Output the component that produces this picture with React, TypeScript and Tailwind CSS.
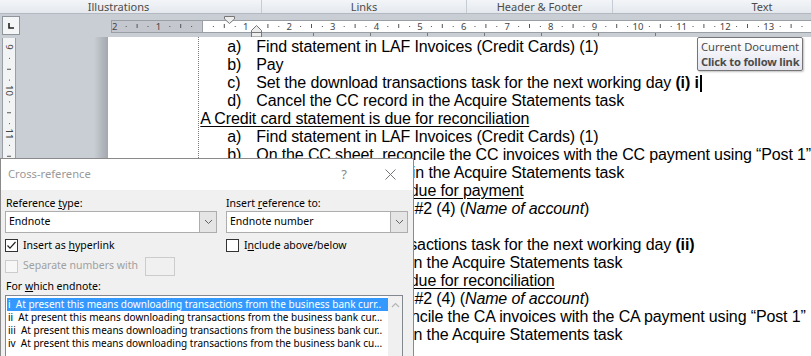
import React from "react";

const UI = { fontFamily: '"Noto Sans", "Open Sans", sans-serif' };
const DOC = { fontFamily: '"Liberation Sans", Arial, sans-serif' };

function HRuler() {
  const cm = 43.6;
  const zero = 91;
  const nums: { x: number; n: number }[] = [];
  for (let i = -2; i <= 13; i++) {
    if (i === 0) continue;
    nums.push({ x: zero + i * cm, n: Math.abs(i) });
  }
  const marks: React.ReactNode[] = [];
  for (let i = -2; i <= 14; i++) {
    const base = zero + i * cm;
    [0.25, 0.75].forEach((f, k) =>
      marks.push(<rect key={`d${i}-${k}`} x={base + f * cm} y={12} width={1} height={1} fill="#555" />)
    );
    marks.push(<rect key={`t${i}`} x={base + 0.5 * cm} y={10} width={1} height={4} fill="#555" />);
  }
  const tabs = [313, 370, 427, 484, 541, 598, 655].map((x) => x - 111);
  return (
    <svg width={700} height={23} className="block">
      <rect x={0.5} y={6.5} width={700} height={12} fill="#fff" stroke="#9a9fa6" />
      <rect x={0.5} y={6.5} width={zero} height={12} fill="#c4c8ce" stroke="#9a9fa6" />
      {marks}
      {nums.map((p) => (
        <text key={p.x} x={p.x} y={16} fontSize={9.5} fill="#444" textAnchor="middle" style={UI}>
          {p.n}
        </text>
      ))}
      {tabs.map((x) => (
        <rect key={x} x={x} y={19} width={1} height={3} fill="#777" />
      ))}
      <path d="M113.5 2.5 L123.5 2.5 L123.5 5 L118.5 9.5 L113.5 5 Z" fill="#ededed" stroke="#777" />
      <path d="M140.5 16.5 L145.5 11.5 L150.5 16.5 L150.5 18.5 L140.5 18.5 Z" fill="#ededed" stroke="#777" />
      <rect x={140.5} y={18.5} width={10} height={4.5} fill="#ededed" stroke="#777" />
    </svg>
  );
}

function VRuler() {
  const cm = 43.5;
  const items: React.ReactNode[] = [];
  const nums = [
    { y: 9, n: 9 },
    { y: 52.5, n: 10 },
    { y: 96, n: 11 },
  ];
  nums.forEach((p) => {
    items.push(
      <text
        key={`n${p.n}`}
        x={0}
        y={0}
        fontSize={9.5}
        fill="#444"
        textAnchor="middle"
        transform={`translate(3.5 ${p.y}) rotate(90)`}
        style={UI}
      >
        {p.n}
      </text>
    );
  });
  [9, 52.5, 96, 139.5].forEach((y, j) => {
    [0.25, 0.75].forEach((f, k) =>
      items.push(<rect key={`d${j}${k}`} x={7} y={y + f * cm} width={1} height={1} fill="#555" />)
    );
    items.push(<rect key={`t${j}`} x={5} y={y + 0.5 * cm} width={4} height={1} fill="#555" />);
  });
  return (
    <svg width={16} height={140} className="block">
      <rect x={0.5} y={-1} width={13} height={142} fill="#f2f3f5" stroke="#9a9fa6" />
      {items}
    </svg>
  );
}

function Line({ m, children, head }: { m?: string; children: React.ReactNode; head?: boolean }) {
  if (head) {
    return (
      <div className="h-[18px] leading-[18px] whitespace-nowrap pl-[1px]">
        <span className="underline underline-offset-[2px] decoration-1">{children}</span>
      </div>
    );
  }
  return (
    <div className="h-[18px] leading-[18px] whitespace-nowrap flex">
      <span className="w-[57px] pl-[28px] shrink-0">{m}</span>
      <span>{children}</span>
    </div>
  );
}

function Chevron() {
  return (
    <svg width={9} height={6} viewBox="0 0 9 6">
      <polyline points="1,1 4.5,4.5 8,1" fill="none" stroke="#606060" strokeWidth={1} />
    </svg>
  );
}

function Select({ value, w }: { value: string; w: string }) {
  return (
    <div className={`${w} h-[22px] border border-[#adadad] bg-white flex`}>
      <div className="flex-1 pl-[3px] flex items-center text-black">{value}</div>
      <div className="w-[17px] border-l border-[#adadad] bg-[#e5e5e5] flex items-center justify-center">
        <Chevron />
      </div>
    </div>
  );
}

function Check({ checked, disabled }: { checked?: boolean; disabled?: boolean }) {
  return (
    <div
      className={`w-[13px] h-[13px] border ${
        disabled ? "border-[#cccccc] bg-[#f7f7f7]" : "border-[#333333] bg-white"
      } flex items-center justify-center shrink-0`}
    >
      {checked && (
        <svg width={11} height={11} viewBox="0 0 11 11">
          <polyline points="1.5,5.5 4,8.2 9.5,2" fill="none" stroke="#222" strokeWidth={1.2} />
        </svg>
      )}
    </div>
  );
}

const items = [
  "i\u00a0 At present this means downloading transactions from the business bank curr..",
  "ii\u00a0 At present this means downloading transactions from the business bank cur...",
  "iii\u00a0 At present this means downloading transactions from the business bank cur..",
  "iv\u00a0 At present this means downloading transactions from the business bank cu...",
];

export default function App() {
  return (
    <div className="w-[811px] h-[356px] relative overflow-hidden bg-[#c9cdd4]" style={UI}>
      {/* ribbon group labels */}
      <div className="h-[14px] flex bg-linear-to-b from-[#f3f5f8] to-[#e4e8ed] border-b border-[#b3b9c2] text-[11px] leading-[13px] text-[#4c4c4c]">
        <div className="w-[262px] flex justify-center pr-[24px] border-r border-[#c6ccd4]">Illustrations</div>
        <div className="w-[205px] flex justify-center border-r border-[#c6ccd4]">Links</div>
        <div className="w-[146px] flex justify-center border-r border-[#c6ccd4]">Header &amp; Footer</div>
        <div className="flex-1 flex justify-center pl-[100px]">Text</div>
      </div>
      {/* ruler row */}
      <div className="h-[23px] flex">
        <div className="w-[111px] pl-[2px] pt-[2px]">
          <div className="w-[18px] h-[19px] bg-[#f4f5f7] border border-[#8f959c] flex items-center justify-center">
            <svg width={8} height={8} viewBox="0 0 8 8">
              <path d="M2 1 V6 H7" fill="none" stroke="#222" strokeWidth={1.6} />
            </svg>
          </div>
        </div>
        <HRuler />
      </div>
      {/* main */}
      <div className="flex h-[319px]">
        <div className="w-[111px] flex">
          <div className="pl-[2px] pt-[1px]">
            <VRuler />
          </div>
          <div className="flex-1" />
          <div className="w-[14px] bg-linear-to-r from-[#c9cdd4] to-[#a3a7ae]" />
        </div>
        <div className="flex-1 bg-white pl-[90px]">
          <div
            className="border-l border-dotted border-[#7a7a7a] h-full pt-[1px] text-black text-[16px] tracking-[-0.13px]"
            style={DOC}
          >
            <Line m="a)">Find statement in LAF Invoices (Credit Cards) (1)</Line>
            <Line m="b)">Pay</Line>
            <Line m="c)">
              Set the download transactions task for the next working day <b>(i) i</b>
              <span className="inline-block w-[2px] h-[17px] bg-black align-[-4px] ml-[1px]" />
            </Line>
            <Line m="d)">Cancel the CC record in the Acquire Statements task</Line>
            <Line head>A Credit card statement is due for reconciliation</Line>
            <Line m="a)">Find statement in LAF Invoices (Credit Cards) (1)</Line>
            <Line m="b)">On the CC sheet, reconcile the CC invoices with the CC payment using “Post 1”</Line>
            <Line m="c)">Cancel the CC record in the Acquire Statements task</Line>
            <Line head>A Credit Account statement is due for payment</Line>
            <Line m="a)">
              Find statement in LAF #2 (4) (<i>Name of account</i>)
            </Line>
            <Line m="b)">Pay</Line>
            <Line m="c)">
              Set the download transactions task for the next working day <b>(ii)</b>
            </Line>
            <Line m="d)">Cancel the CA record in the Acquire Statements task</Line>
            <Line head>A Credit Account statement is due for reconciliation</Line>
            <Line m="a)">
              Find statement in LAF #2 (4) (<i>Name of account</i>)
            </Line>
            <Line m="b)">On the CA sheet, reconcile the CA invoices with the CA payment using “Post 1”</Line>
            <Line m="c)">Cancel the CA record in the Acquire Statements task</Line>
          </div>
        </div>
      </div>

      {/* tooltip */}
      <div className="absolute left-[697px] top-[37px] w-[106px] h-[34px] rounded-[2px] border border-[#767676] bg-linear-to-b from-white to-[#e4e5f0] pl-[3px] pt-[1px] text-[11.2px] leading-[15px] text-[#4c4c4c] whitespace-nowrap shadow-[1px_1px_2px_rgba(0,0,0,0.25)]">
        <div>Current Document</div>
        <div className="font-bold tracking-[-0.2px]">Click to follow link</div>
      </div>

      {/* dialog */}
      <div className="absolute left-0 top-[158px] w-[414px] h-[200px] border border-[#8a8a8a] bg-[#f0f0f0] text-[10.5px] text-black">
        <div className="h-[31px] bg-white flex items-center pl-[7px] text-[#999999]">
          <span className="flex-1 text-[11.2px]">Cross-reference</span>
          <span className="w-[46px] text-center text-[#888] text-[13px]">?</span>
          <span className="w-[46px] flex items-center justify-center">
            <svg width={11} height={11} viewBox="0 0 11 11">
              <path d="M0.5 0.5 L10.5 10.5 M10.5 0.5 L0.5 10.5" stroke="#777" strokeWidth={1} />
            </svg>
          </span>
        </div>
        <div className="pl-[4px] pt-[5px]">
          <div className="flex gap-[9px]">
            <div className="w-[212px]">
              <div className="h-[16px] leading-[16px] pl-[1px]">
                Reference <u>t</u>ype:
              </div>
              <Select value="Endnote" w="w-[212px]" />
            </div>
            <div className="w-[182px]">
              <div className="h-[16px] leading-[16px]">
                Insert <u>r</u>eference to:
              </div>
              <Select value="Endnote number" w="w-[182px]" />
            </div>
          </div>
          <div className="flex gap-[9px] mt-[5px] h-[15px] items-center">
            <div className="w-[212px] flex items-center gap-[5px]">
              <Check checked />
              <span>
                Insert as <u>h</u>yperlink
              </span>
            </div>
            <div className="w-[182px] flex items-center gap-[5px]">
              <Check />
              <span>
                I<u>n</u>clude above/below
              </span>
            </div>
          </div>
          <div className="flex items-center mt-[3px] h-[20px]">
            <div className="w-[140px] flex items-center gap-[5px] text-[#a0a0a0] whitespace-nowrap">
              <Check disabled />
              <span>Separate numbers with</span>
            </div>
            <div className="w-[30px] h-[19px] border border-[#cccccc] bg-[#f0f0f0]" />
          </div>
          <div className="h-[18px] leading-[18px] mt-[1px] pl-[1px]">
            For <u>w</u>hich endnote:
          </div>
          <div className="w-[398px] h-[70px] border border-[#828790] bg-white flex">
            <div className="flex-1 pt-[2px] pl-[1px] overflow-hidden text-[10px]">
              {items.map((t, i) => (
                <div
                  key={i}
                  className={`h-[13px] leading-[13px] pl-[1px] whitespace-nowrap overflow-hidden ${
                    i === 0 ? "bg-[#3399ff] text-white" : ""
                  }`}
                >
                  {t}
                </div>
              ))}
            </div>
            <div className="w-[14px] bg-[#f0f0f0] flex justify-center pt-[6px]">
              <svg width={9} height={6} viewBox="0 0 9 6">
                <polyline points="1,5 4.5,1.5 8,5" fill="none" stroke="#b5b5b5" strokeWidth={1.2} />
              </svg>
            </div>
          </div>
        </div>
      </div>
    </div>
  );
}
